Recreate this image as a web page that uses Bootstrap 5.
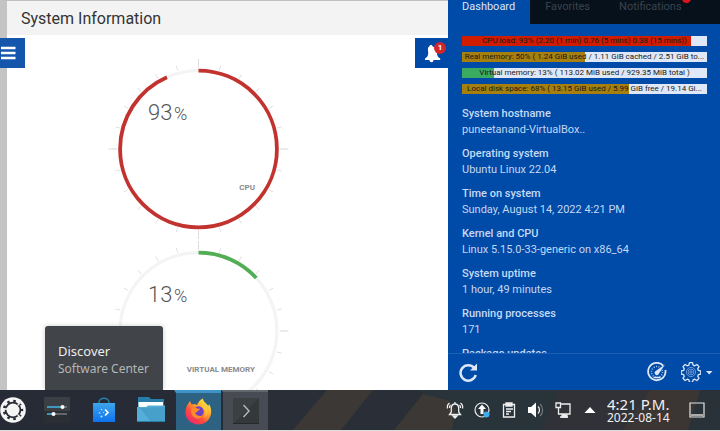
<!DOCTYPE html>
<html lang="en">
<head>
<meta charset="utf-8">
<meta name="viewport" content="width=device-width, initial-scale=1">
<title>System Information</title>
<link rel="stylesheet" href="https://cdn.jsdelivr.net/npm/bootstrap@5.3.0/dist/css/bootstrap.min.css">
<style>
body{font-family:Roboto,sans-serif;font-size:12px;line-height:16px;background:#fff}
button{border:0;padding:0;background:none;color:inherit}
svg{display:block;flex:none}
.stage{min-height:0}
.page-pane{border-left:7px solid #c4c4c4;border-top:1px solid #bfbfbf;background:#fff}
.page-title{height:34px;background:#f3f3f3;color:#333;font-size:16px;font-weight:400;line-height:36px;padding-left:14px}
.gauges{padding:23px 0 0 100px}
.side-btn{top:38px;height:30px;background:#1556ad;color:#fff}
.menu-btn{left:0;width:25px}
.alert-btn{right:0;width:33px;background:#0049a6}
.alert-count{top:4px;right:2px;width:12px;height:12px;border-radius:50%;background:#d3252c;font-size:8px;line-height:12px;font-weight:700}
.side-panel{flex:0 0 272px;min-width:0;background:#004aa8;color:#c3d8f4}
.tab-strip{height:24px;background:#07111c;overflow:hidden}
.tab-strip a{color:#3a434d;font-size:11px;line-height:13px;padding:0 15px;text-decoration:none;position:relative}
.tab-strip a.active{background:#004aa8;color:#dbe7f7;padding-left:14px}
.tab-strip .last-tab{padding:0 0 0 14px}
.tab-dot{top:-6px;right:-9px;width:9px;height:9px;border-radius:50%;background:#e0131c}
.meters{padding:12px 13px 0 14px;gap:6px}
.meter{height:10px;background:#dfe8f6;color:#191919;font-size:8px;line-height:10px;text-align:center;white-space:nowrap;overflow:hidden}
.meter-fill{position:absolute;top:0;bottom:0;left:0}
.fill-red{background:#d01c00}.fill-gold{background:#a77f0c}.fill-green{background:#3bab60}
.facts{padding:12px 14px 0;margin:0;min-height:0;font-size:11px}
.facts dt{font-weight:500;color:#c6daf5}
.facts dd{margin:0 0 8px}
.panel-foot{height:37px;border-top:1px solid #1d5fb4;padding:0 7px 0 10px;color:#dce8f8}
.gear-btn{margin-left:14px}
.tip{left:45px;bottom:0;background:#414448;border-radius:3px 3px 0 0;padding:16px 14px 12px 13px;font-family:"Noto Sans",sans-serif;color:#eceded;box-shadow:0 0 5px #0003;line-height:18px}
.tip strong{font-size:13px;font-weight:400;display:block}
.tip span{font-size:12px;color:#b4b6b8}
.taskbar{height:41px;background:#272b35;border-bottom:1px solid #dcdcdc;color:#f0f1f2}
.taskbar button{display:flex;align-items:center;justify-content:center;height:40px;width:47px}
.taskbar .start-btn{width:33px;justify-content:flex-start}
.taskbar .tray-btn{width:27px}
.taskbar .desk-btn{width:47px}
.task-active{background:#2e6282;border-top:3px solid #3f93c6;border-left:2px solid #272b35}
.taskbar .task-open{background:#484b53;border-top:2px solid #62666d;border-left:2px solid #272b35}
.clock{width:70px;font-family:"Noto Sans",sans-serif;padding:0 0 0 4px;white-space:nowrap}
.clock-time{font-size:15px;line-height:15px}
.clock-date{font-size:12px;line-height:12px}
</style>
<script src="https://cdn.jsdelivr.net/npm/bootstrap@5.3.0/dist/js/bootstrap.bundle.min.js"></script>
</head>
<body class="d-flex flex-column vh-100 overflow-hidden">
<div class="stage d-flex flex-grow-1 position-relative overflow-hidden">
  <main class="flex-grow-1 position-relative overflow-hidden">
    <div class="page-pane h-100 overflow-hidden">
      <h1 class="page-title m-0">System Information</h1>
      <div class="gauges">
        <svg width="182" height="182" viewBox="0 0 182 182" role="img" aria-label="CPU 93%">
          <g id="ticks" fill="none">
            <circle cx="91.500" cy="91" r="83.500" stroke="#dadada" stroke-width="5" stroke-dasharray=".8 23.200" stroke-dashoffset=".4" pathLength="576"/>
            <circle cx="91.500" cy="91" r="86" stroke="#dcdcdc" stroke-width="8" stroke-dasharray="1 143" stroke-dashoffset=".5" pathLength="576"/>
            <circle cx="91.500" cy="91" r="78.400" stroke="#f4f4f4" stroke-width="3.200"/>
          </g>
          <circle cx="91.500" cy="91" r="78.400" fill="none" stroke="#c23330" stroke-width="3.800" pathLength="100" stroke-dasharray="93.400 100" transform="rotate(-90 91.500 91)"/>
          <text x="41" y="62" font-size="22" font-weight="300" fill="#555">93</text>
          <text x="67" y="62" font-size="18" font-weight="300" fill="#555">%</text>
          <text x="148" y="132" text-anchor="end" font-size="8" font-weight="700" fill="#8a8a8a">CPU</text>
        </svg>
        <svg width="182" height="182" viewBox="0 0 182 182" role="img" aria-label="Virtual memory 13%">
          <use href="#ticks"/>
          <circle cx="91.500" cy="91" r="78.400" fill="none" stroke="#52ae55" stroke-width="3.800" pathLength="100" stroke-dasharray="13.200 100" transform="rotate(-90 91.500 91)"/>
          <text x="41" y="62" font-size="22" font-weight="300" fill="#555">13</text>
          <text x="67" y="62" font-size="18" font-weight="300" fill="#555">%</text>
          <text x="148" y="132" text-anchor="end" font-size="8" font-weight="700" fill="#8a8a8a">VIRTUAL MEMORY</text>
        </svg>
      </div>
    </div>
    <button class="side-btn menu-btn position-absolute" aria-label="Menu"><svg width="25" height="30" viewBox="0 0 25 30" fill="none" stroke="#fff" stroke-width="2.600"><path d="M1 10h14.500M1 15h14.500M1 20h14.500"/></svg></button>
    <button class="side-btn alert-btn position-absolute" aria-label="Notifications"><svg width="33" height="30" viewBox="0 0 33 30" fill="#fff"><path d="M16 7c1 0 1.600.6 1.700 1.500 3.300.9 4.300 3.500 4.300 6.200 0 3 .9 4.500 3.200 5.800V22H10v-1.500c2.300-1.300 3.200-2.800 3.200-5.800 0-2.700-1.100-5.300 1.100-6.200C14.400 7.600 15 7 16 7zM14.500 22h4c0 1.500-.8 2.200-2 2.200s-2-.7-2-2.200z"/></svg><span class="alert-count position-absolute">1</span></button>
  </main>
  <aside class="side-panel d-flex flex-column">
    <nav class="tab-strip d-flex flex-shrink-0" aria-label="Panel">
      <a class="active" href="#">Dashboard</a><a href="#">Favorites</a><a class="last-tab" href="#">Notifications<span class="tab-dot position-absolute"></span></a>
    </nav>
    <div class="meters d-flex flex-column flex-shrink-0">
      <div class="meter position-relative"><div class="meter-fill fill-red" style="width:93.5%"></div><span class="position-relative">CPU load: 93% (2.20 (1 min) 0.76 (5 mins) 0.38 (15 mins))</span></div>
      <div class="meter position-relative"><div class="meter-fill fill-gold" style="width:50%"></div><span class="position-relative">Real memory: 50% ( 1.24 GiB used / 1.11 GiB cached / 2.51 GiB to...</span></div>
      <div class="meter position-relative"><div class="meter-fill fill-green" style="width:13%"></div><span class="position-relative">Virtual memory: 13% ( 113.02 MiB used / 929.35 MiB total )</span></div>
      <div class="meter position-relative"><div class="meter-fill fill-gold" style="width:68%"></div><span class="position-relative">Local disk space: 68% ( 13.15 GiB used / 5.99 GiB free / 19.14 Gi...</span></div>
    </div>
    <dl class="facts flex-grow-1 overflow-hidden">
      <dt>System hostname</dt><dd>puneetanand-VirtualBox..</dd>
      <dt>Operating system</dt><dd>Ubuntu Linux 22.04</dd>
      <dt>Time on system</dt><dd>Sunday, August 14, 2022 4:21 PM</dd>
      <dt>Kernel and CPU</dt><dd>Linux 5.15.0-33-generic on x86_64</dd>
      <dt>System uptime</dt><dd>1 hour, 49 minutes</dd>
      <dt>Running processes</dt><dd>171</dd>
      <dt>Package updates</dt>
    </dl>
    <div class="panel-foot d-flex align-items-center flex-shrink-0">
      <button aria-label="Refresh"><svg width="20" height="20" viewBox="0 0 20 20"><path d="M16.200 6A7.700 7.700 0 1 0 17.700 13" fill="none" stroke="currentColor" stroke-width="2.500"/><path d="M19 1.500V8.500H12z" fill="currentColor"/></svg></button>
      <button class="ms-auto" aria-label="Performance"><svg width="20" height="20" viewBox="0 0 20 20"><path d="M16.200 3.600A8.700 8.700 0 1 0 18.400 8" fill="none" stroke="currentColor" stroke-width="1.800"/><circle cx="10" cy="10" r="5.500" fill="none" stroke="currentColor" stroke-width="1.500" stroke-dasharray="1 1.600" pathLength="36" opacity=".8"/><path d="M18 2.500L11.500 12.200a2.200 2.200 0 1 1-3.200-3z" fill="currentColor"/><path d="M6.500 15.500h7" stroke="currentColor" stroke-width="1.500"/></svg></button>
      <button class="gear-btn d-flex align-items-center" aria-label="Settings"><svg width="20" height="20" viewBox="-10 -10 20 20" fill="none" stroke="currentColor"><path stroke-width="1.300" stroke-linejoin="round" d="M-1.500-9.300h3l.6 2.400 1.600.7 2.200-1.300 2.100 2.100-1.300 2.200.7 1.600 2.400.6v3l-2.400.6-.7 1.600 1.300 2.200-2.100 2.100-2.200-1.300-1.600.7-.6 2.400h-3l-.6-2.400-1.600-.7-2.200 1.300-2.100-2.100 1.300-2.200-.7-1.600-2.400-.6v-3l2.400-.6.7-1.600-1.300-2.200 2.100-2.100 2.200 1.300 1.600-.7z"/><circle r="4.600" stroke-width=".8" opacity=".6"/><circle r="2.900" stroke-width=".8" opacity=".6"/><circle r="1.200" stroke-width=".8" opacity=".6"/></svg><svg class="ms-1" width="8" height="8" viewBox="0 0 8 8" fill="currentColor"><path d="M1 3h6.500L4.200 6.500z"/></svg></button>
    </div>
  </aside>
  <div class="tip position-absolute" role="tooltip"><strong>Discover</strong><span>Software Center</span></div>
</div>
<footer class="taskbar d-flex flex-shrink-0 position-relative">
  <svg class="position-absolute top-0 start-0 w-100" height="40" viewBox="0 0 720 40" preserveAspectRatio="none" aria-hidden="true">
    <path d="M268 0h452v40H268z" fill="#2a2e37"/><path d="M327 0h46l-32 40h-48z" fill="#3b3836"/><path d="M418 0h142v40H452l4-20-8-10-25-6z" fill="#28333a"/><path d="M423 4l25 6 8 10-4 20h-58z" fill="#3b3836"/><path d="M560 0h160v40H540z" fill="#303237"/><path d="M650 0h55l-12 40h-70z" fill="#3b3634"/><path d="M700 0h20v40h-32z" fill="#2a3239"/>
  </svg>
  <div class="d-flex position-relative">
    <button class="start-btn" aria-label="Application launcher"><svg width="26" height="26" viewBox="-13 -13 26 26"><circle r="12.800" fill="#f5f5f5"/><circle r="7.400" fill="none" stroke="#272b35" stroke-width="1.800"/><circle r="9" fill="none" stroke="#272b35" stroke-width="2.400" pathLength="90" stroke-dasharray="4 6" stroke-dashoffset="2"/><path d="M4.500-4.500l3.500-3.500M4.500 4.500l3.500 3.500M-5-1h-5" stroke="#f5f5f5" stroke-width="1.400"/></svg></button>
    <button aria-label="System settings"><svg width="26" height="26" viewBox="0 0 26 26"><path fill="#3b3e42" d="M0 0h26v26H0z"/><path fill="#2b2e32" d="M0 14h26v12H0z"/><path d="M3 10h15M3 17h6" stroke="#45b6e8" stroke-width="1.500"/><path d="M20 10h3M10 17h13" stroke="#777b80" stroke-width="1.500"/><circle cx="18.500" cy="10" r="2" fill="#fff"/><circle cx="9.500" cy="17" r="2" fill="#fff"/></svg></button>
    <button aria-label="Discover"><svg width="24" height="28" viewBox="0 0 24 28"><defs><linearGradient id="bag" x2="0" y2="1"><stop stop-color="#3fa5ea"/><stop offset="1" stop-color="#0d73ee"/></linearGradient></defs><path d="M7 9V6.500C7 .8 17 .8 17 6.500V9" fill="none" stroke="#277fae" stroke-width="1.400"/><path fill="url(#bag)" d="M1 7h22v19H1z"/><path d="M13 13.500l3 3-3 3" fill="none" stroke="#fff" stroke-width="1.600"/><g fill="#c5e6ff"><circle cx="9.500" cy="13.500" r=".7"/><circle cx="7.500" cy="17" r=".8"/><circle cx="9.500" cy="20.500" r="1"/><circle cx="11.500" cy="16.500" r=".6"/></g></svg></button>
    <button aria-label="Files"><svg width="28" height="26" viewBox="0 0 28 26"><path fill="#277ca8" d="M1 0h11l2 2h13v9H1z"/><path fill="#fff" d="M1.500 5H26v7H1.500z"/><path fill="#54afd8" d="M0 10h9l2-1.500h17V25H0z"/><path fill="#3e96c2" d="M28 10v15H14L3 11z" opacity=".6"/><path fill="#2a7da9" d="M0 24h28v1H0z"/></svg></button>
    <button class="task-active" aria-label="Firefox"><svg width="27" height="28" viewBox="0 0 27 28"><defs><linearGradient id="fox" x1=".85" y1=".05" x2=".2" y2=".9"><stop stop-color="#fff04a"/><stop offset=".4" stop-color="#ffa32a"/><stop offset=".7" stop-color="#ff4e3b"/><stop offset="1" stop-color="#ee2a6c"/></linearGradient></defs><path fill="url(#fox)" d="M3 6l2-3 1.500 3.500L9.500 6 12 7c1.500-3 2.500-5 6-6.500 0 3 3 4.500 4.500 6.500l1 1 .5-2c2.500 4 3 9 1 13-2.200 4.700-6.500 7.500-11.500 7.500C6.500 26.500.5 21.500.5 14.500.5 11 1.500 8 3 6z"/><circle cx="13.500" cy="13.500" r="5.200" fill="#7040c4"/><path fill="#ff8a2b" d="M6.500 10.500c2-2 4.500-1.500 6 .2h2.500c.5 1.300-2.500 2-2.500 2.600 0 1-2 1.200-2.300 1.700.8 2.500 4.500 3.500 7.800 2.500-1 2.500-5 4-8 2.300-3.200-1.700-4.500-5.300-3.500-9.300z"/><path fill="#ffca3c" d="M18 3c1 4 4.500 5 4.500 10 0 4-2 6-4 7.500 3-4 2.500-8-.5-10.500-2-2-1-5 0-7z" opacity=".8"/></svg></button>
    <button class="task-open" aria-label="Terminal"><svg width="26" height="26" viewBox="0 0 26 26"><path fill="#34383b" d="M0 0h26v26H0z"/><path fill="#42474a" d="M0 0h26L0 26z" opacity=".5"/><path fill="#252829" d="M0 25h26v1H0z"/><path d="M10.500 7l5.500 6-5.500 6" fill="none" stroke="#b3b6b8" stroke-width="1.500"/></svg></button>
  </div>
  <div class="d-flex align-items-center position-relative ms-auto">
    <button class="tray-btn" aria-label="Alerts"><svg width="18" height="18" viewBox="0 0 18 18" fill="none" stroke="#f0f0f0" stroke-width="1.300"><path d="M3.500 13.500h11l-1.800-2.500V7.500C12.700 4.500 11 3 9 3S5.300 4.500 5.300 7.500V11zM9 1v2M1.500 7.500C1 5 2 3 3.500 2M3.500 7c0-1.500.4-2.500 1-3M16.500 7.500c.5-2.500-.5-4.500-2-5.500M14.500 7c0-1.500-.4-2.500-1-3"/><path d="M7 15h4l-2 2z" fill="#f0f0f0"/></svg></button>
    <button class="tray-btn" aria-label="Updates"><svg width="18" height="18" viewBox="0 0 18 18"><circle cx="9" cy="9" r="7" fill="none" stroke="#eee" stroke-width="1.200"/><path fill="#fff" d="M9 3.500L13 8h-2.500v5h-3V8H5z"/><circle cx="13.500" cy="13.500" r="3" fill="#3daee9"/></svg></button>
    <button class="tray-btn" aria-label="Clipboard"><svg width="16" height="18" viewBox="0 0 16 18" fill="none" stroke="#eee" stroke-width="1.300"><path d="M2.500 3.500h11V16h-11z"/><path d="M5 2h6v3H5z" fill="#eee"/><path d="M5 8h7M5 10.500h5M5 13h3"/></svg></button>
    <button class="tray-btn" aria-label="Volume"><svg width="18" height="18" viewBox="0 0 18 18"><path fill="#fff" d="M1 6h3l5-4.500v15L4 12H1z"/><path d="M11 5.500c2 1.500 2 5.500 0 7" fill="none" stroke="#eee" stroke-width="1.300"/><path d="M13 3c3.500 3 3.500 9 0 12" fill="none" stroke="#777" stroke-width="1.200"/></svg></button>
    <button class="tray-btn" aria-label="Network"><svg width="18" height="18" viewBox="0 0 18 18" fill="none" stroke="#eee" stroke-width="1.300"><path d="M6.500 3H16v10H4.500V6.500M2 2h4.500v4.500H2zM10 13v3M6 16h8"/><path d="M8 14h5v2H8z" fill="#eee"/></svg></button>
    <button class="tray-btn" aria-label="Show hidden icons"><svg width="12" height="8" viewBox="0 0 12 8"><path fill="#fff" d="M6 1l5.500 6H.5z"/></svg></button>
    <div class="clock"><div class="clock-time">4:21 P.M.</div><div class="clock-date">2022-08-14</div></div>
    <button class="desk-btn" aria-label="Show desktop"><svg width="16" height="16" viewBox="0 0 16 16"><path d="M1 1h14v14H1z" fill="none" stroke="#e4e4e4" stroke-width="1.200"/><path d="M2 12h12v2H2z" fill="#aaa"/></svg></button>
  </div>
</footer>
</body>
</html>
